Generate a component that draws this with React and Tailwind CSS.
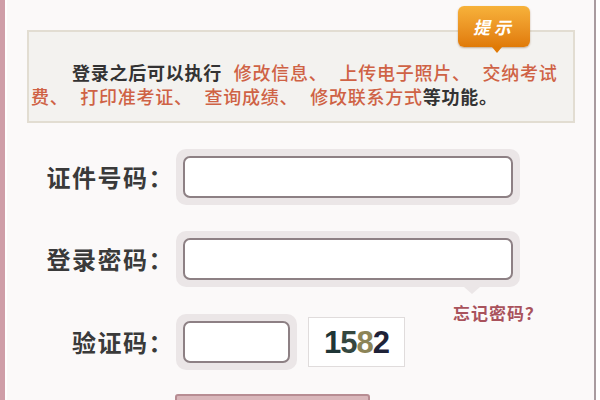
import React from "react";

const cjk = { fontFamily: '"Noto Sans CJK SC", "Noto Sans", sans-serif' };

function Field({ width }) {
  return (
    <div className="rounded-[10px] bg-[#ebe6e7] p-[7px]">
      <div
        className={`h-[42px] rounded-[7px] border-2 border-[#8d8084] bg-white ${width}`}
      />
    </div>
  );
}

function Label({ text }) {
  return (
    <div className="w-[169px] shrink-0 pr-[2px] text-right text-[24px] font-bold tracking-[1.5px] text-[#3a3a3a]">
      {text}
    </div>
  );
}

export default function App() {
  return (
    <div
      className="flex h-[400px] w-[600px] overflow-hidden bg-white"
      style={cjk}
    >
      <div className="w-[5px] shrink-0 bg-[#cf9ea8]" />
      <div className="w-[2px] shrink-0 bg-white" />
      <div className="relative flex-1 bg-[#fbf9f9] pt-[30px]">
        {/* tip box */}
        <div className="relative ml-[20px] mr-[19px] h-[93px] border-2 border-[#e2ddd2] bg-[#f3f2ef] px-[2px] pt-[28px]">
          <p className="text-[18px] leading-[24px] tracking-[0.75px] [word-spacing:7px]">
            <span className="pl-[41px] font-bold text-[#333]">登录之后可以执行 </span>
            <span className="font-medium text-[#cf6245]">
              修改信息、 上传电子照片、 交纳考试费、 打印准考证、 查询成绩、 修改联系方式
            </span>
            <span className="font-bold text-[#333]">等功能。</span>
          </p>
          <div className="absolute right-[43px] top-[-26px] flex h-[41px] w-[72px] items-center justify-center rounded-[6px] bg-gradient-to-b from-[#f7b23a] to-[#e07a05] shadow-[0_1px_2px_rgba(120,60,0,0.4)]">
            <span className="text-[17px] font-bold italic tracking-[4px] text-white">
              提示
            </span>
            <div className="absolute bottom-[-6px] left-[34px] h-0 w-0 border-x-[5px] border-t-[6px] border-x-transparent border-t-[#e07a05]" />
          </div>
        </div>

        {/* form */}
        <div className="mt-[26px] flex flex-col">
          <div className="flex items-center">
            <Label text="证件号码：" />
            <Field width="w-[330px]" />
          </div>

          <div className="mt-[26px] flex items-center">
            <Label text="登录密码：" />
            <div className="relative">
              <Field width="w-[330px]" />
              <div className="absolute bottom-[-7px] left-[288px] h-0 w-0 border-x-[8px] border-t-[7px] border-x-transparent border-t-[#ebe6e7]" />
            </div>
          </div>

          <div className="mt-[27px] flex items-center">
            <Label text="验证码：" />
            <Field width="w-[107px]" />
            <div className="ml-[11px] flex h-[50px] w-[97px] items-center justify-center border border-[#e0dcdc] bg-white">
              <span
                className="text-[31px] font-bold leading-none tracking-[-1px]"
                style={{ fontFamily: '"Liberation Sans", Arial, sans-serif' }}
              >
                <span className="text-[#1f3536]">1</span>
                <span className="text-[#34473f]">5</span>
                <span className="text-[#8c8457]">8</span>
                <span className="text-[#1e2238]">2</span>
              </span>
            </div>
            <div className="ml-[48px] mt-[-58px] text-[17px] font-bold tracking-[1px] text-[#a9525c]">
              忘记密码？
            </div>
          </div>

          <div className="ml-[168px] mt-[24px] h-[30px] w-[195px] rounded-[3px] border-2 border-[#b78d93] bg-[#d9b7bb]" />
        </div>
      </div>
      <div className="w-[2px] shrink-0 bg-[#a89b9f]" />
      <div className="w-[4px] shrink-0 bg-white" />
    </div>
  );
}
